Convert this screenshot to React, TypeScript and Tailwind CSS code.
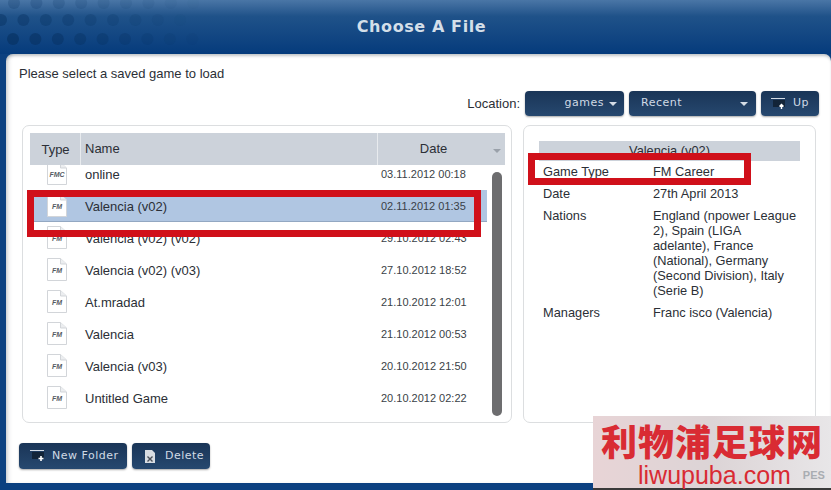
const FILES = [
  { label: "FMC", name: "online", date: "03.11.2012 00:18" },
  { label: "FM", name: "Valencia (v02)", date: "02.11.2012 01:35", selected: true },
  { label: "FM", name: "Valencia (v02) (v02)", date: "29.10.2012 02:43" },
  { label: "FM", name: "Valencia (v02) (v03)", date: "27.10.2012 18:52" },
  { label: "FM", name: "At.mradad", date: "21.10.2012 12:01" },
  { label: "FM", name: "Valencia", date: "21.10.2012 00:53" },
  { label: "FM", name: "Valencia (v03)", date: "20.10.2012 21:50" },
  { label: "FM", name: "Untitled Game", date: "20.10.2012 02:22" },
];

const DETAILS = [
  { label: "Game Type", value: "FM Career" },
  { label: "Date", value: "27th April 2013" },
  {
    label: "Nations",
    value:
      "England (npower League 2), Spain (LIGA adelante), France (National), Germany (Second Division), Italy (Serie B)",
  },
  { label: "Managers", value: "Franc isco (Valencia)" },
];

const BTN =
  "flex items-center rounded-[4px] bg-gradient-to-b from-[#1a3557] to-[#26486f] text-[#d0dae5] text-[11px] tracking-[0.5px] shadow-[0_1px_2px_rgba(0,0,0,0.35)] font-['DejaVu_Sans',sans-serif]";

function FileIcon({ label }: { label: string }) {
  return (
    <svg width="20" height="23" viewBox="0 0 20 23" className="shrink-0">
      <path d="M0.5 0.5H13.5L19.5 6V22.5H0.5Z" fill="#ffffff" stroke="#d2d5d9" />
      <path d="M13.5 0.5V6H19.5" fill="#eceef0" stroke="#d2d5d9" />
      <text
        x="10"
        y="15"
        textAnchor="middle"
        fontSize="7"
        fontWeight="700"
        fontStyle="italic"
        fill="#555b63"
        fontFamily="Liberation Sans, sans-serif"
      >
        {label}
      </text>
    </svg>
  );
}

function HeaderDots() {
  const rows = [
    { y: 3, start: 14, strength: 0.22 },
    { y: 20, start: 1, strength: 0.45 },
    { y: 39, start: 13, strength: 0.6 },
  ];
  return (
    <svg width="240" height="54" viewBox="0 0 240 54" className="absolute left-0 top-0">
      {rows.map((row) =>
        Array.from({ length: 9 }).map((_, i) => (
          <circle
            key={`${row.y}-${i}`}
            cx={row.start + i * 22.4}
            cy={row.y}
            r="6"
            fill="#07305f"
            opacity={Math.max(0, row.strength * (1 - i * 0.115))}
          />
        )),
      )}
    </svg>
  );
}

function Caret() {
  return <span className="h-0 w-0 border-x-[4px] border-t-[4px] border-x-transparent border-t-[#d5dde6]" />;
}

function FolderIcon({ plus }: { plus?: boolean }) {
  return (
    <svg width="16" height="12" viewBox="0 0 16 12" className="shrink-0">
      <path d="M0 0.5H14" stroke="#d5dde6" strokeWidth="1" />
      <path d="M2 2H14V9H2Z" fill="#122438" />
      {plus ? (
        <path d="M11 6V11M8.5 8.5H13.5" stroke="#ffffff" strokeWidth="1.6" />
      ) : (
        <path d="M10.5 11V7M8.5 8.5L10.5 6.5L12.5 8.5" stroke="#ffffff" strokeWidth="1.4" fill="none" />
      )}
    </svg>
  );
}

function BinIcon() {
  return (
    <svg width="12" height="15" viewBox="0 0 12 15" className="shrink-0">
      <path d="M1 1H8L11 4V14H1Z" fill="#d9dde2" />
      <path d="M3.5 7.5L8.5 12.5M8.5 7.5L3.5 12.5" stroke="#4a4f57" strokeWidth="1.4" />
    </svg>
  );
}

export default function App() {
  return (
    <div className="relative flex h-[490px] w-[831px] flex-col overflow-hidden bg-[#0b4080] font-['Liberation_Sans',sans-serif] text-[#2b2f36]">
      <header className="relative flex h-[54px] shrink-0 items-center justify-center bg-gradient-to-b from-[#4a76a6] via-[#1f5289] via-30% to-[#053b7c]">
        <HeaderDots />
        <h1 className="relative pl-[12px] font-['DejaVu_Sans',sans-serif] text-[16px] font-bold tracking-[0.6px] text-[#d4dfe9]">
          Choose A File
        </h1>
      </header>

      <main className="ml-[6px] flex h-[429px] flex-col rounded-t-[7px] bg-white shadow-[inset_0_3px_3px_-1px_rgba(90,100,110,0.35),inset_4px_0_4px_-2px_rgba(90,100,110,0.3)]">
        <p className="pl-[13px] pt-[12px] text-[13px] leading-[15px]">Please select a saved game to load</p>

        <div className="mt-[10px] flex h-[25px] items-center justify-end pr-[12px]">
          <span className="mr-[5px] text-[13px]">Location:</span>
          <div className={`${BTN} mr-[5px] h-[25px] w-[99px] justify-end gap-[5px] pr-[7px]`}>
            games <Caret />
          </div>
          <div className={`${BTN} mr-[5px] h-[25px] w-[127px] justify-between pl-[12px] pr-[8px]`}>
            Recent <Caret />
          </div>
          <div className={`${BTN} h-[25px] w-[58px] gap-[6px] pl-[10px]`}>
            <FolderIcon /> Up
          </div>
        </div>

        <div className="mt-[9px] flex h-[298px] gap-[11px] pl-[16px]">
          <section className="relative h-full w-[490px] overflow-hidden rounded-[7px] border border-[#dcdee0] pl-[7px] pt-[7px]">
            <div className="flex h-[32px] w-[475px] items-center bg-[#ccd2da] text-[13px]">
              <div className="flex h-full w-[51px] items-center justify-center border-r border-[#e8ebee] pl-[1px] pt-[2px]">Type</div>
              <div className="flex h-full w-[297px] items-center border-r border-[#e8ebee] pl-[4px]">Name</div>
              <div className="relative flex h-full flex-1 items-center justify-center pr-[16px]">
                Date
                <span className="absolute right-[4px] top-[16px] h-0 w-0 border-x-[4px] border-t-[4px] border-x-transparent border-t-[#9aa1aa]" />
              </div>
            </div>

            <div className="h-[258px] w-[457px] overflow-hidden">
              <div className="-mt-[7px]">
                {FILES.map((file) => (
                  <div
                    key={file.name}
                    className={`flex h-[32px] items-center border-b ${
                      file.selected ? "border-[#93a8c2] bg-[#b0c6e2]" : "border-transparent"
                    } text-[13px]`}
                  >
                    <div className="flex w-[51px] justify-center pl-[2px]">
                      <FileIcon label={file.label} />
                    </div>
                    <div className="w-[300px] pl-[4px] pt-[2px]">{file.name}</div>
                    <div className="pt-[2px] text-[11px] text-[#3a3f47]">{file.date}</div>
                  </div>
                ))}
              </div>
            </div>

            <div className="absolute left-[469px] top-[46px] h-[244px] w-[10px] rounded-[5px] bg-[#6d6d6f]" />
          </section>

          <section className="h-full w-[293px] rounded-[7px] border border-[#dcdee0] px-[15px] pt-[15px] text-[12.8px]">
            <div className="flex h-[20px] items-center justify-center bg-[#ccd2da]">Valencia (v02)</div>
            <dl className="mt-[3px] flex flex-col gap-[7px] pl-[4px] leading-[15px]">
              {DETAILS.map((row) => (
                <div key={row.label} className="flex">
                  <dt className="w-[110px] shrink-0">{row.label}</dt>
                  <dd className="w-[150px]">{row.value}</dd>
                </div>
              ))}
            </dl>
          </section>
        </div>

        <div className="ml-[13px] mt-[20px] flex gap-[5px]">
          <button type="button" className={`${BTN} h-[26px] w-[108px] gap-[6px] pl-[11px]`}>
            <FolderIcon plus /> New Folder
          </button>
          <button type="button" className={`${BTN} h-[26px] w-[78px] gap-[9px] pl-[12px]`}>
            <BinIcon /> Delete
          </button>
        </div>
      </main>

      {/* red annotations drawn on the screenshot */}
      <div className="absolute left-[27px] top-[190px] h-[47px] w-[454px] border-[7px] border-[#d0101a]" />
      <div className="absolute left-[528px] top-[153px] h-[32px] w-[223px] border-[7px] border-[#d0101a]" />

      {/* watermark */}
      <div className="absolute left-[593px] top-[416px] flex h-[74px] w-[238px] flex-col items-center border-b-2 border-[#3a3a3a] bg-gradient-to-r from-[#e8d4d6] via-[#dcd4d6] to-[#e8e6e8] font-['Noto_Sans_CJK_SC',sans-serif]">
        <div className="mt-[4px] whitespace-nowrap text-[36px] font-black leading-[40px] tracking-[1px] text-[#d92b33]">
          利物浦足球网
        </div>
        <div className="mt-[4px] flex w-full items-center pl-[45px] font-['Liberation_Sans',sans-serif] text-[25px] leading-[23px] text-[#d92b33]">
          liwupuba.com
          <span className="ml-[12px] text-[11px] font-bold text-[#a9adb2]">PES</span>
        </div>
      </div>
    </div>
  );
}
